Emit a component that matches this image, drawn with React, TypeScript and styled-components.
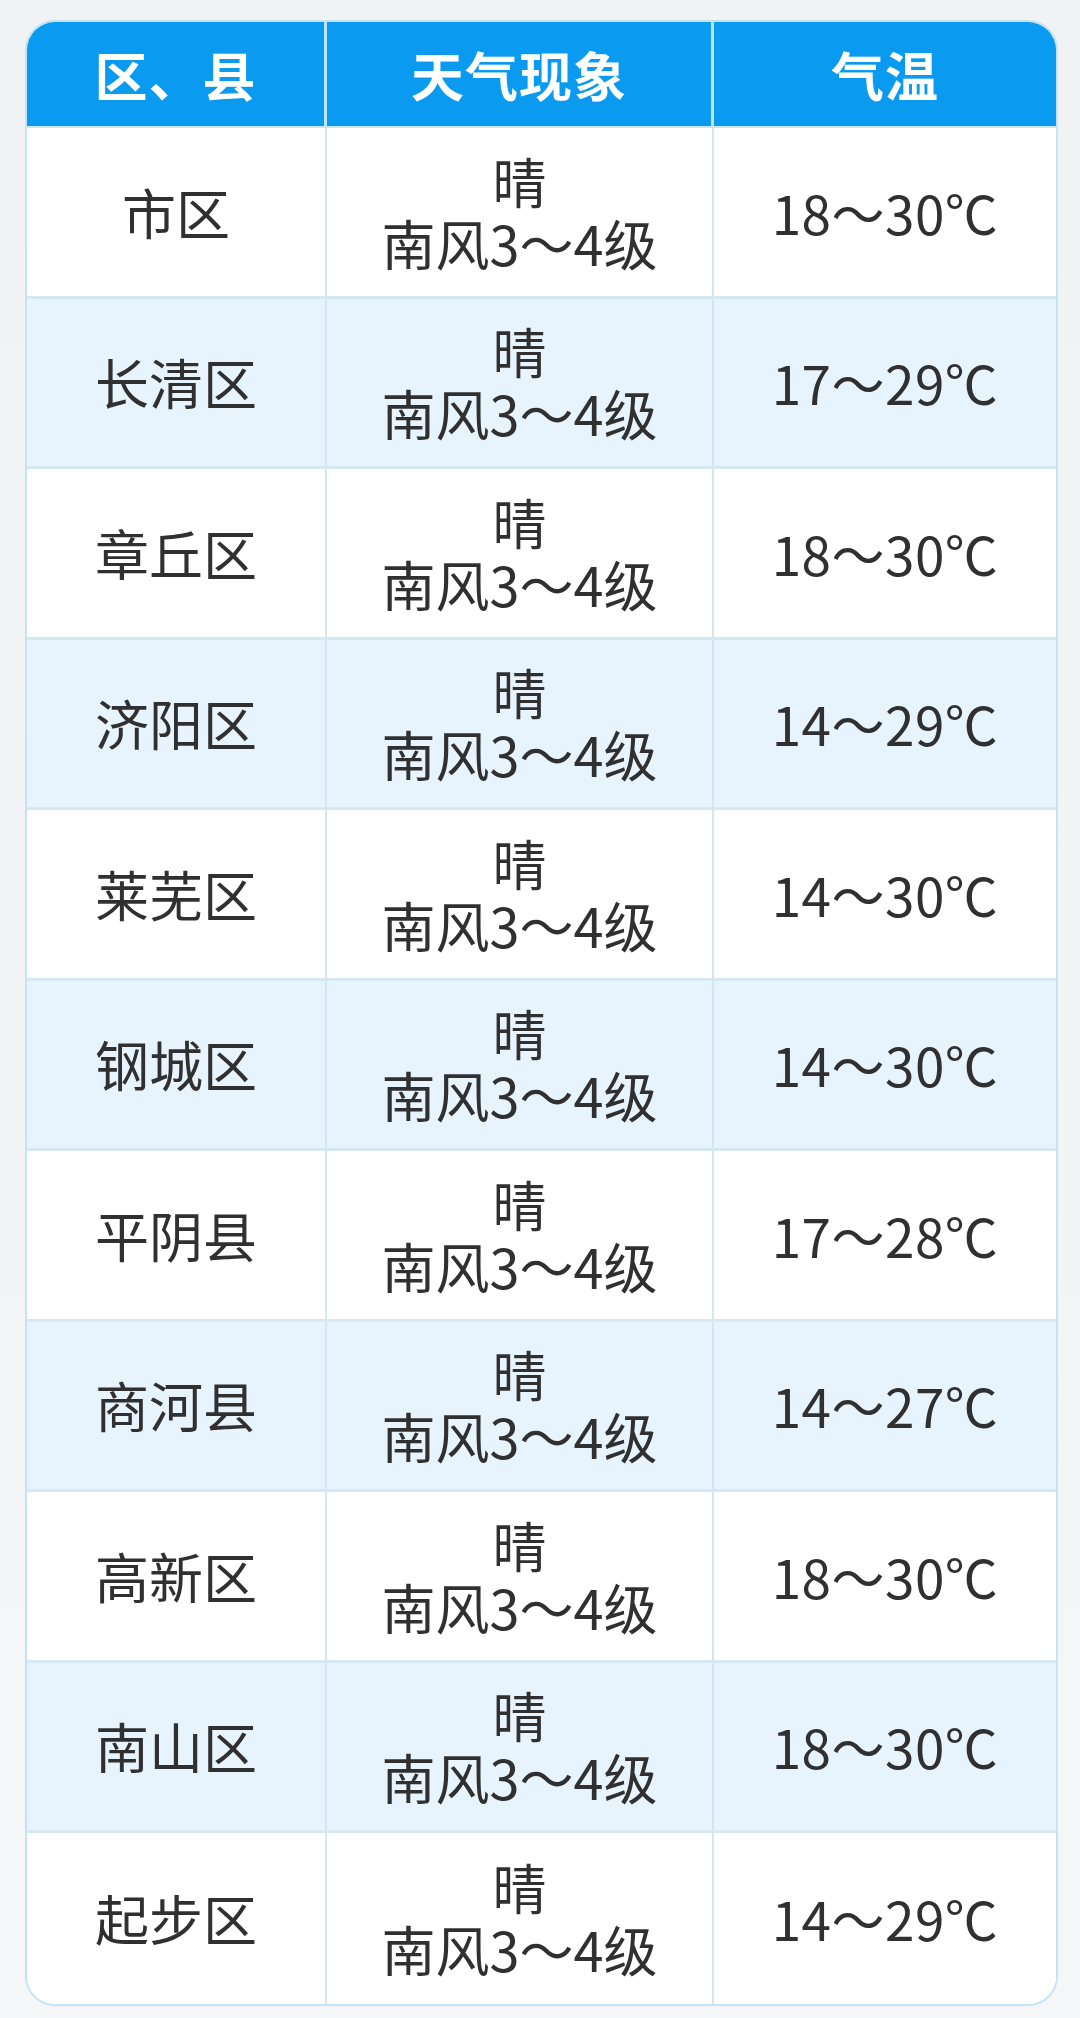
import { FunctionComponent } from "react";
import styled, { createGlobalStyle } from "styled-components";

const GlobalStyle = createGlobalStyle`
  html, body {
    margin: 0;
    padding: 0;
    background: #f3f4f6;
  }
  body {
    font-family: "Noto Sans CJK SC", "Noto Sans", sans-serif;
  }
`;

const Page = styled.div`
  width: 1080px;
  height: 2018px;
  box-sizing: border-box;
  padding: 20px 22px 0 25px;
  background: linear-gradient(180deg, #f1f2f4 0%, #f5f6f8 100%);
`;

const Table = styled.div`
  width: 1033px;
  box-sizing: border-box;
  border: 2px solid #c4e3f6;
  border-radius: 30px;
  overflow: hidden;
  background: #ffffff;
  display: grid;
  grid-template-columns: 300px 387px 1fr;
`;

const HeadCell = styled.div<{ $last?: boolean }>`
  height: 106px;
  display: flex;
  align-items: center;
  justify-content: center;
  background: #0a9af0;
  color: #ffffff;
  font-size: 53px;
  font-weight: 700;
  letter-spacing: 1px;
  border-right: ${(p) => (p.$last ? "none" : "3px solid #bfe5fb")};
  border-bottom: 2px solid #c8e6f7;
  box-sizing: border-box;
`;

const Cell = styled.div<{ $alt?: boolean; $last?: boolean; $bottom?: boolean }>`
  height: 170.5px;
  box-sizing: border-box;
  display: flex;
  flex-direction: column;
  align-items: center;
  justify-content: center;
  background: ${(p) => (p.$alt ? "#e7f4fd" : "#ffffff")};
  color: #303030;
  font-size: 54px;
  line-height: 62px;
  text-align: center;
  border-right: ${(p) => (p.$last ? "none" : "2px solid #d3e6f2")};
  border-bottom: ${(p) => (p.$bottom ? "none" : "3px solid #d6e8f3")};
`;

const Line = styled.span`
  display: block;
  height: 62px;
  overflow: visible;
`;

const Temp = styled.span`
  font-size: 53px;
  letter-spacing: 0.5px;
`;

const rows: [string, string][] = [
  ["市区", "18～30℃"],
  ["长清区", "17～29℃"],
  ["章丘区", "18～30℃"],
  ["济阳区", "14～29℃"],
  ["莱芜区", "14～30℃"],
  ["钢城区", "14～30℃"],
  ["平阴县", "17～28℃"],
  ["商河县", "14～27℃"],
  ["高新区", "18～30℃"],
  ["南山区", "18～30℃"],
  ["起步区", "14～29℃"],
];

const App: FunctionComponent = () => {
  return (
    <>
      <GlobalStyle />
      <Page>
        <Table>
          <HeadCell>区、县</HeadCell>
          <HeadCell>天气现象</HeadCell>
          <HeadCell $last>气温</HeadCell>
          {rows.map(([name, temp], i) => {
            const alt = i % 2 === 1;
            const bottom = i === rows.length - 1;
            return [
              <Cell key={`n${i}`} $alt={alt} $bottom={bottom}>
                {name}
              </Cell>,
              <Cell key={`w${i}`} $alt={alt} $bottom={bottom}>
                <Line>晴</Line>
                <Line>南风3～4级</Line>
              </Cell>,
              <Cell key={`t${i}`} $alt={alt} $bottom={bottom} $last>
                <Temp>{temp}</Temp>
              </Cell>,
            ];
          })}
        </Table>
      </Page>
    </>
  );
};

export default App;
